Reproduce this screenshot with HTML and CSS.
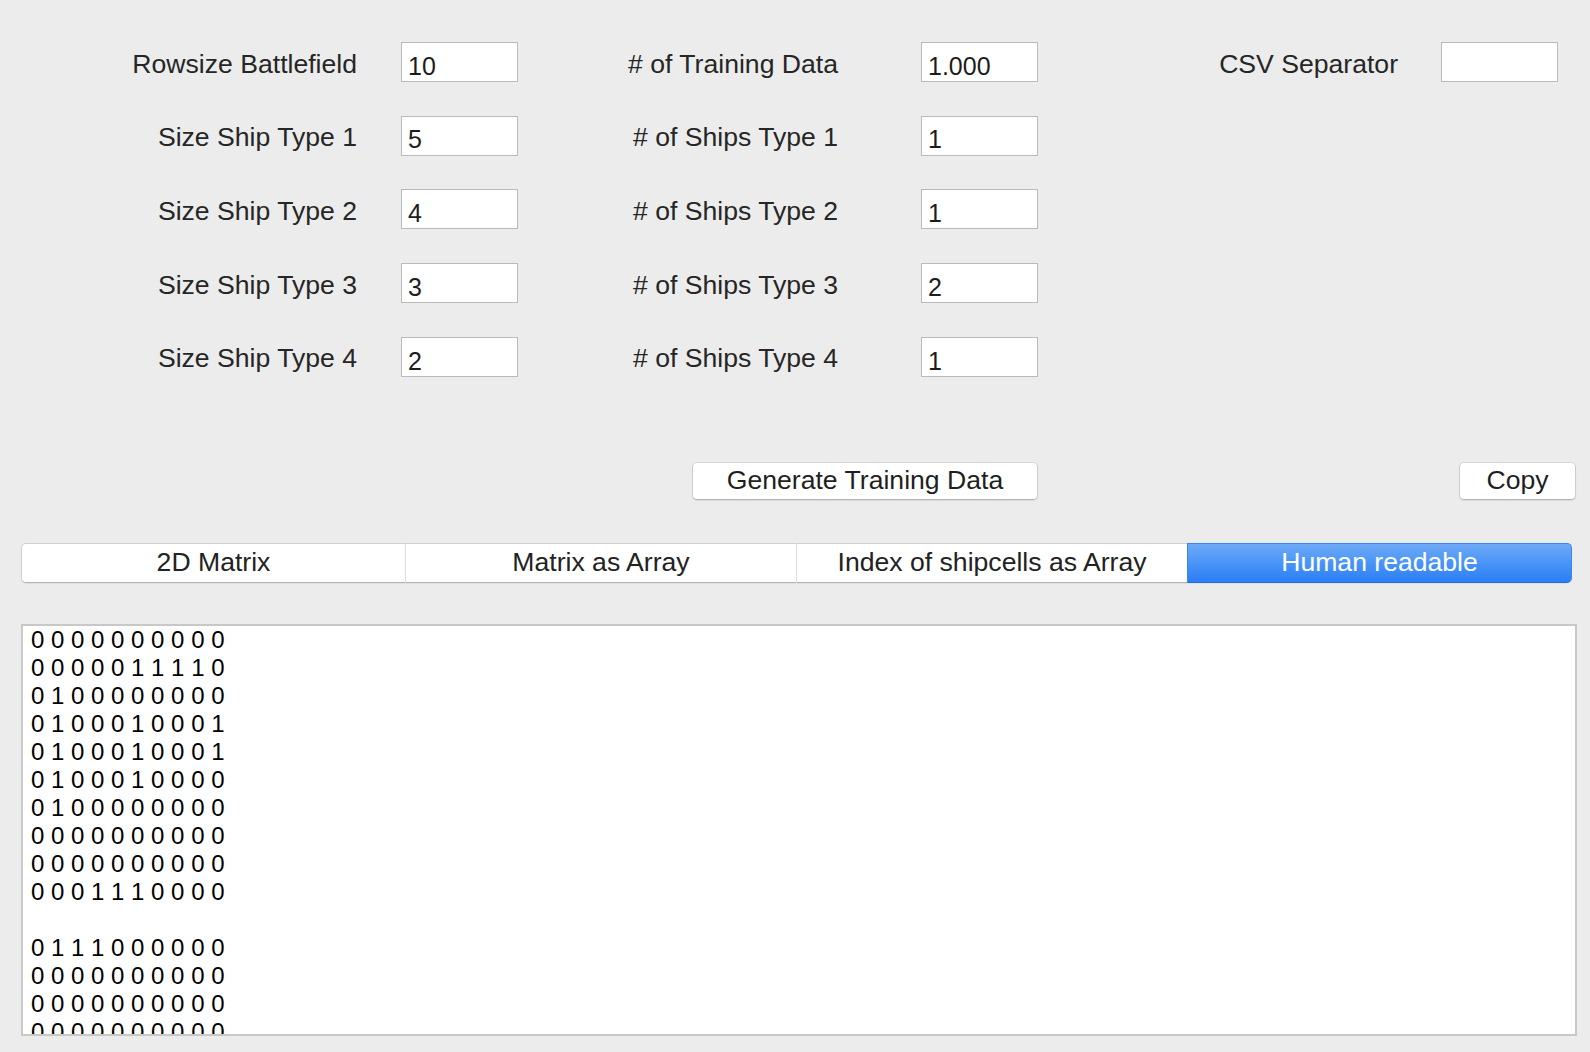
FILE: index.html
```html
<!DOCTYPE html>
<html lang="en">
<head>
<meta charset="utf-8">
<title>Battleship Training Data Generator</title>
<link rel="stylesheet" href="styles.css">
</head>
<body>
<div class="app">
  <div class="form">
    <label class="label col1">Rowsize Battlefield</label>
    <input class="field" type="text" value="10" readonly>
    <label class="label col2"># of Training Data</label>
    <input class="field" type="text" value="1.000" readonly>
    <label class="label col3">CSV Separator</label>
    <input class="field" type="text" value="" readonly>

    <label class="label col1">Size Ship Type 1</label>
    <input class="field" type="text" value="5" readonly>
    <label class="label col2"># of Ships Type 1</label>
    <input class="field" type="text" value="1" readonly>
    <span class="empty"></span><span class="empty"></span>

    <label class="label col1">Size Ship Type 2</label>
    <input class="field" type="text" value="4" readonly>
    <label class="label col2"># of Ships Type 2</label>
    <input class="field" type="text" value="1" readonly>
    <span class="empty"></span><span class="empty"></span>

    <label class="label col1">Size Ship Type 3</label>
    <input class="field" type="text" value="3" readonly>
    <label class="label col2"># of Ships Type 3</label>
    <input class="field" type="text" value="2" readonly>
    <span class="empty"></span><span class="empty"></span>

    <label class="label col1">Size Ship Type 4</label>
    <input class="field" type="text" value="2" readonly>
    <label class="label col2"># of Ships Type 4</label>
    <input class="field" type="text" value="1" readonly>
    <span class="empty"></span><span class="empty"></span>
  </div>

  <div class="actions">
    <button class="btn btn-generate" type="button">Generate Training Data</button>
    <button class="btn btn-copy" type="button">Copy</button>
  </div>

  <div class="tabs">
    <div class="tab">2D Matrix</div>
    <div class="tab">Matrix as Array</div>
    <div class="tab">Index of shipcells as Array</div>
    <div class="tab tab-active">Human readable</div>
  </div>

  <div class="output"><pre class="output-text">0 0 0 0 0 0 0 0 0 0
0 0 0 0 0 1 1 1 1 0
0 1 0 0 0 0 0 0 0 0
0 1 0 0 0 1 0 0 0 1
0 1 0 0 0 1 0 0 0 1
0 1 0 0 0 1 0 0 0 0
0 1 0 0 0 0 0 0 0 0
0 0 0 0 0 0 0 0 0 0
0 0 0 0 0 0 0 0 0 0
0 0 0 1 1 1 0 0 0 0

0 1 1 1 0 0 0 0 0 0
0 0 0 0 0 0 0 0 0 0
0 0 0 0 0 0 0 0 0 0
0 0 0 0 0 0 0 0 0 0
0 0 0 0 0 0 1 0 0 0
0 0 0 0 0 0 1 0 0 0</pre></div>
</div>
</body>
</html>
```

FILE: styles.css
```css
* {
  box-sizing: border-box;
}

html, body {
  margin: 0;
  padding: 0;
  background: #ececec;
}

body {
  font-family: "Liberation Sans", Arial, sans-serif;
  color: #262626;
  width: 1590px;
  height: 1052px;
  overflow: hidden;
}

.app {
  padding-top: 42px;
}

.form {
  display: grid;
  grid-template-columns: 401px 117px 403px 117px 403px 117px;
  grid-auto-rows: 40px;
  row-gap: 33.7px;
}

.label {
  display: flex;
  align-items: center;
  justify-content: flex-end;
  font-size: 26.6px;
  color: #262626;
  white-space: nowrap;
  padding-top: 4px;
}

.col1 { padding-right: 44px; }
.col2 { padding-right: 83px; }
.col3 { padding-right: 43px; }

.field {
  width: 117px;
  height: 40px;
  margin: 0;
  border: 1px solid #bababa;
  border-radius: 0;
  background: #ffffff;
  font-family: "Liberation Sans", Arial, sans-serif;
  font-size: 25px;
  color: #1c1c1c;
  padding: 8.5px 6px 0 6px;
  outline: none;
}

.actions {
  display: flex;
  margin-top: 85px;
  height: 38px;
}

.btn {
  height: 38px;
  margin: 0;
  padding: 0;
  background: #ffffff;
  border: 1px solid #cdcdcd;
  border-top-color: #d6d6d6;
  border-bottom-color: #b4b4b4;
  border-radius: 5px;
  box-shadow: 0 1px 1px rgba(0, 0, 0, 0.08);
  font-family: "Liberation Sans", Arial, sans-serif;
  font-size: 26.6px;
  color: #1f1f1f;
}

.btn-generate {
  width: 346px;
  margin-left: 692px;
}

.btn-copy {
  width: 117px;
  margin-left: auto;
  margin-right: 14px;
}

.tabs {
  display: grid;
  grid-template-columns: 383px 391px 391px 384px;
  width: 1549px;
  height: 40px;
  margin: 43px 0 0 21px;
  background: #ffffff;
  border: 1px solid #cfcfcf;
  border-bottom-color: #b2b2b2;
  border-radius: 5px;
  box-shadow: 0 1px 1px rgba(0, 0, 0, 0.06);
}

.tab {
  display: flex;
  align-items: center;
  justify-content: center;
  font-size: 26.6px;
  color: #222222;
  border-left: 1px solid #dedede;
  white-space: nowrap;
  margin-top: -1px;
  margin-bottom: -1px;
}

.tab:first-child {
  border-left: none;
}

.tab-active {
  color: #ffffff;
  border-left: none;
  background: linear-gradient(to bottom, #6eaaf7 0%, #4a94f7 50%, #2b7ef4 100%);
  border: 1px solid #3a86f2;
  border-bottom-color: #1f6fe6;
  border-radius: 0 5px 5px 0;
  margin-right: -1px;
}

.output {
  width: 1556px;
  height: 412px;
  margin: 41px 0 0 21px;
  background: #ffffff;
  border: 2px solid #c8c8c8;
  overflow: hidden;
}

.output-text {
  margin: 0;
  padding: 0 0 0 8px;
  font-family: "Liberation Sans", Arial, sans-serif;
  font-size: 24px;
  line-height: 28px;
  color: #000000;
  white-space: pre;
}

.empty {
  display: block;
}
```
